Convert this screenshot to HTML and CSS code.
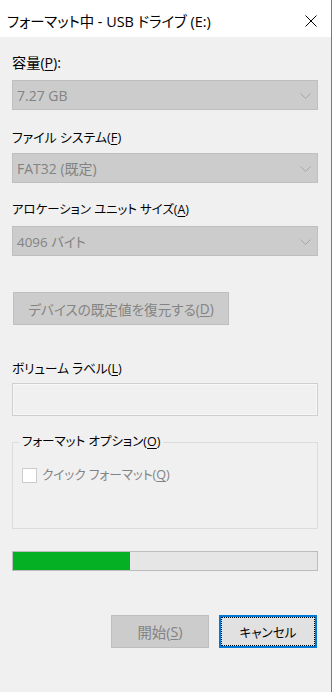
FILE: index.html
```html
<!DOCTYPE html>
<html lang="ja">
<head>
<meta charset="utf-8">
<title>フォーマット中 - USB ドライブ (E:)</title>
<link rel="stylesheet" href="styles.css">
</head>
<body>
<div class="window">
  <div class="titlebar">
    <span class="title">フォーマット中 - USB ドライブ (E:)</span>
    <span class="close">
      <svg width="12" height="12" viewBox="0 0 12 12"><path d="M0.5 0.5 L11.5 11.5 M11.5 0.5 L0.5 11.5" stroke="#000" stroke-width="1" fill="none"/></svg>
    </span>
  </div>
  <div class="content">
    <div class="label l1 big">容量(<u>P</u>):</div>
    <div class="combo">
      <span>7.27 GB</span>
      <svg class="chev" width="11" height="6" viewBox="0 0 11 6"><path d="M0.5 0.5 L5.5 5.5 L10.5 0.5" stroke="#a6a6a6" stroke-width="1" fill="none"/></svg>
    </div>
    <div class="label l2">ファイル システム(<u>F</u>)</div>
    <div class="combo">
      <span>FAT32 (既定)</span>
      <svg class="chev" width="11" height="6" viewBox="0 0 11 6"><path d="M0.5 0.5 L5.5 5.5 L10.5 0.5" stroke="#a6a6a6" stroke-width="1" fill="none"/></svg>
    </div>
    <div class="label l2 l3">アロケーション ユニット サイズ(<u>A</u>)</div>
    <div class="combo">
      <span class="kana-mix">4096 バイト</span>
      <svg class="chev" width="11" height="6" viewBox="0 0 11 6"><path d="M0.5 0.5 L5.5 5.5 L10.5 0.5" stroke="#a6a6a6" stroke-width="1" fill="none"/></svg>
    </div>
    <div class="btn disabled restore">デバイスの既定値を復元する(<u>D</u>)</div>
    <div class="label l4">ボリューム ラベル(<u>L</u>)</div>
    <div class="textbox"></div>
    <fieldset class="group">
      <legend>フォーマット オプション(<u>O</u>)</legend>
      <div class="check">
        <span class="box"></span>
        <span class="check-label">クイック フォーマット(<u>Q</u>)</span>
      </div>
    </fieldset>
    <div class="progress"><div class="bar" style="width:117px"></div></div>
    <div class="actions">
      <div class="btn disabled action start">開始(<u>S</u>)</div>
      <div class="btn cancel action">キャンセル</div>
    </div>
  </div>
</div>
</body>
</html>
```
FILE: styles.css
```css
html, body {
  margin: 0;
  padding: 0;
  background: #f0f0f0;
}
body {
  font-family: "Open Sans", "Noto Sans CJK JP", sans-serif;
  font-size: 12.6px;
  font-feature-settings: "palt";
  color: #000;
}
u {
  text-decoration: underline;
  text-underline-offset: 2px;
}
.window {
  width: 331px;
  height: 692px;
  border-right: 1px solid #7a7a7a;
  background: #f0f0f0;
  display: flex;
  flex-direction: column;
}
.titlebar {
  height: 37px;
  background: #fff;
  display: flex;
  align-items: center;
  justify-content: space-between;
  padding: 0 14px 0 7px;
  box-sizing: border-box;
}
.title {
  font-size: 14.4px;
  line-height: 16px;
  padding-top: 6px;
}
.close {
  display: flex;
  padding-top: 4px;
}
.content {
  display: flex;
  flex-direction: column;
  padding-left: 12px;
  width: 306px;
}
.label {
  line-height: 16px;
  height: 16px;
}
.big { font-size: 14.2px; }
.l1 { margin-top: 18px; margin-bottom: 9px; }
.l2 { margin-top: 19px; margin-bottom: 8px; font-size: 12.9px; }
.l3 { font-size: 12.4px; }
.combo {
  height: 30px;
  box-sizing: border-box;
  border: 1px solid #bfbfbf;
  background: #cccccc;
  color: #838383;
  display: flex;
  align-items: center;
  justify-content: space-between;
  padding: 0 6px 0 4px;
  font-size: 14px;
}
.kana-mix { font-size: 13.4px; }
.chev { margin-top: 1px; }
.btn {
  box-sizing: border-box;
  display: flex;
  align-items: center;
  justify-content: center;
  font-size: 12.6px;
}
.disabled {
  border: 1px solid #bfbfbf;
  background: #cccccc;
  color: #838383;
}
.restore {
  margin-top: 36px;
  margin-left: 1px;
  width: 216px;
  height: 33px;
  font-size: 13.6px;
}
.l4 { margin-top: 36px; margin-bottom: 6px; font-size: 12.6px; }
.textbox {
  height: 33px;
  box-sizing: border-box;
  border: 1px solid #cfcfcf;
  background: #f0f0f0;
  box-shadow: inset 0 0 0 1px #f7f7f7;
}
.group {
  margin: 18px 0 0 0;
  padding: 0 0 0 6px;
  height: 95px;
  box-sizing: border-box;
  border: 1px solid #dcdcdc;
}
.group legend {
  padding: 0 3px;
  line-height: 16px;
  font-size: 12.5px;
}
.check {
  display: flex;
  align-items: center;
  margin-top: 17px;
  margin-left: 3px;
  gap: 5px;
}
.box {
  width: 15px;
  height: 15px;
  box-sizing: border-box;
  border: 1px solid #cccccc;
  background: #fff;
}
.check-label {
  color: #838383;
  font-size: 12.6px;
  line-height: 16px;
}
.progress {
  margin-top: 22px;
  height: 20px;
  box-sizing: border-box;
  border: 1px solid #bcbcbc;
  background: #e6e6e6;
  display: flex;
}
.bar {
  background: #06b025;
  height: 100%;
}
.actions {
  display: flex;
  justify-content: flex-end;
  gap: 10px;
  margin-top: 44px;
  margin-right: 1px;
}
.action {
  width: 98px;
  height: 33px;
}
.start { font-size: 14.4px; }
.cancel {
  border: 2px solid #0078d7;
  background: #e1e1e1;
  outline: 1px dotted #000;
  outline-offset: -3px;
  color: #000;
}
```
